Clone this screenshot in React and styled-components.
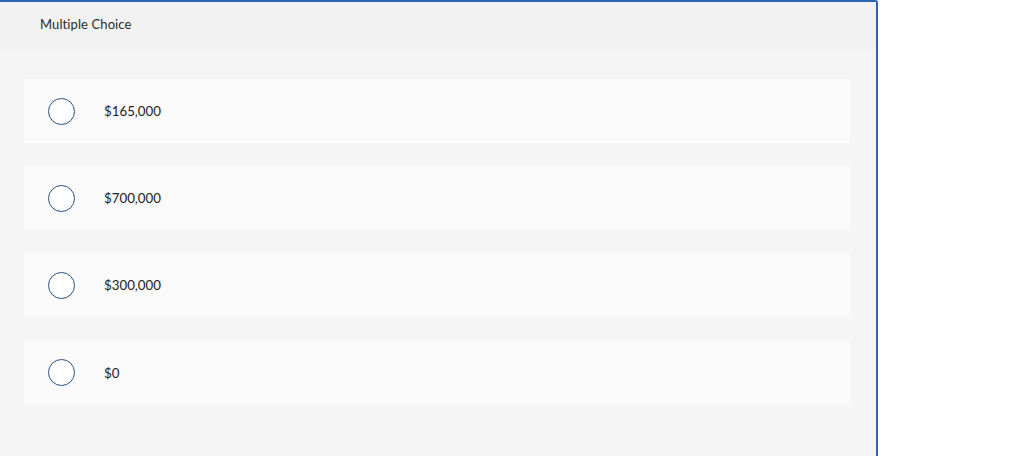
import React from "react";
import styled, { createGlobalStyle } from "styled-components";

const Global = createGlobalStyle`
  html, body { margin: 0; padding: 0; background: #ffffff; }
  body { font-family: "Lato", "Open Sans", "Liberation Sans", sans-serif; }
`;

const Panel = styled.div`
  width: 876px;
  height: 454px;
  border-top: 2px solid #2a64b4;
  border-right: 2px solid #2a64b4;
  border-top-right-radius: 3px;
  background: #f5f5f5;
  display: flex;
  flex-direction: column;
  overflow: hidden;
`;

const Header = styled.div`
  height: 47px;
  box-sizing: border-box;
  padding: 0 0 3px 40px;
  background: #f2f2f2;
  display: flex;
  align-items: center;
  font-size: 13px;
  color: #2b2b2b;
  letter-spacing: 0.1px;
`;

const Options = styled.div`
  display: flex;
  flex-direction: column;
  gap: 23.2px;
  padding: 30px 26px 0 24px;
`;

const Option = styled.label`
  height: 64px;
  background: #fafafa;
  display: flex;
  align-items: center;
  padding-left: 24px;
  gap: 29px;
  cursor: pointer;
`;

const Radio = styled.span`
  width: 25px;
  height: 25px;
  border-radius: 50%;
  border: 1px solid #264f7e;
  background: #ffffff;
  flex: none;
`;

const Label = styled.span`
  font-size: 13.3px;
  color: #222;
`;

const choices = ["$165,000", "$700,000", "$300,000", "$0"];

export default function App() {
  return (
    <>
      <Global />
      <Panel>
        <Header>Multiple Choice</Header>
        <Options>
          {choices.map((c) => (
            <Option key={c}>
              <Radio />
              <Label>{c}</Label>
            </Option>
          ))}
        </Options>
      </Panel>
    </>
  );
}
